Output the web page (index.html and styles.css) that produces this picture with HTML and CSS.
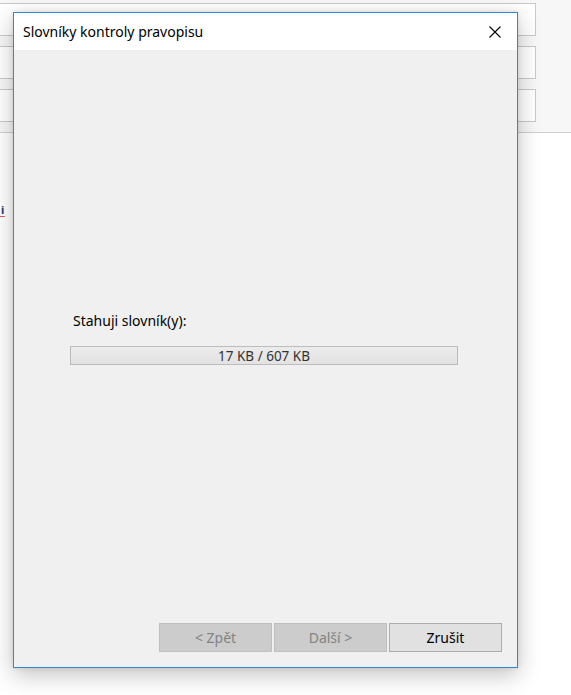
FILE: index.html
```html
<!DOCTYPE html>
<html lang="cs">
<head>
<meta charset="utf-8">
<title>Slovníky kontroly pravopisu</title>
<link rel="stylesheet" href="styles.css">
</head>
<body>
<div class="page">
  <div class="top-panel">
    <div class="field"></div>
    <div class="field"></div>
    <div class="field"></div>
  </div>
  <div class="side-text"><span class="frag">i</span></div>
</div>

<div class="dialog">
  <div class="titlebar">
    <span class="title">Slovníky kontroly pravopisu</span>
    <svg class="close" width="12" height="12" viewBox="0 0 12 12" aria-label="Zavřít">
      <path d="M0.5 0.5 L11.5 11.5 M11.5 0.5 L0.5 11.5" stroke="#000" stroke-width="1.1" fill="none"/>
    </svg>
  </div>
  <div class="content">
    <div class="progress-area">
      <div class="label">Stahuji slovník(y):</div>
      <div class="progress"><span>17 KB / 607 KB</span></div>
    </div>
    <div class="buttons">
      <button class="btn" disabled>&lt; Zpět</button>
      <button class="btn" disabled>Další &gt;</button>
      <button class="btn primary">Zrušit</button>
    </div>
  </div>
</div>
</body>
</html>
```

FILE: styles.css
```css
html, body {
  margin: 0;
  padding: 0;
  background: #ffffff;
  width: 571px;
  height: 695px;
  overflow: hidden;
  font-family: "Noto Sans", "Open Sans", "DejaVu Sans", sans-serif;
}

.page {
  position: relative;
  width: 571px;
  height: 695px;
}

.top-panel {
  background: #f7f7f7;
  border-bottom: 1px solid #cfcfcf;
  display: flex;
  flex-direction: column;
  gap: 10px;
  padding-top: 3px;
  box-sizing: border-box;
  height: 133px;
}

.field {
  width: 537px;
  margin-left: -1px;
  height: 33px;
  box-sizing: border-box;
  background: #ffffff;
  border: 1px solid #c9c9c9;
}

.side-text {
  padding-top: 70px;
  font-size: 11px;
  line-height: 13px;
}

.frag {
  display: inline-block;
  margin-left: 0;
  padding: 0 1px;
  color: #1b3a6b;
  font-weight: bold;
  border-bottom: 1px solid #e05a6b;
}

.dialog {
  position: absolute;
  left: 13px;
  top: 12px;
  width: 505px;
  height: 656px;
  box-sizing: border-box;
  border: 1px solid #2f88d2;
  background: #f0f0f0;
  display: flex;
  flex-direction: column;
  box-shadow: 0 7px 22px rgba(0, 0, 0, 0.24), 0 0 5px rgba(0, 0, 0, 0.10);
}

.titlebar {
  height: 37px;
  flex: none;
  background: #ffffff;
  display: flex;
  align-items: center;
  justify-content: space-between;
  padding: 0 16px 0 9px;
}

.title {
  font-size: 14px;
  color: #000;
}

.close {
  display: block;
  margin-top: 1px;
}

.content {
  flex: 1;
  display: flex;
  flex-direction: column;
  justify-content: space-between;
  padding: 0 15px 15px 56px;
}

.progress-area {
  padding-top: 262px;
}

.label {
  font-size: 14px;
  line-height: 18px;
  color: #000;
  margin-left: 3px;
}

.progress {
  margin-top: 16px;
  width: 388px;
  height: 19px;
  box-sizing: border-box;
  border: 1px solid #bcbcbc;
  background: linear-gradient(#ececec, #e2e2e2);
  display: flex;
  align-items: center;
  justify-content: center;
  font-size: 13.5px;
  color: #333;
}

.buttons {
  display: flex;
  justify-content: flex-end;
  gap: 2px;
}

.btn {
  width: 113px;
  height: 29px;
  box-sizing: border-box;
  font-family: inherit;
  font-size: 14px;
  padding: 0;
  border: 1px solid #bfbfbf;
  background: #cccccc;
  color: #838383;
}

.btn.primary {
  background: #e1e1e1;
  border-color: #adadad;
  color: #000;
}
```
